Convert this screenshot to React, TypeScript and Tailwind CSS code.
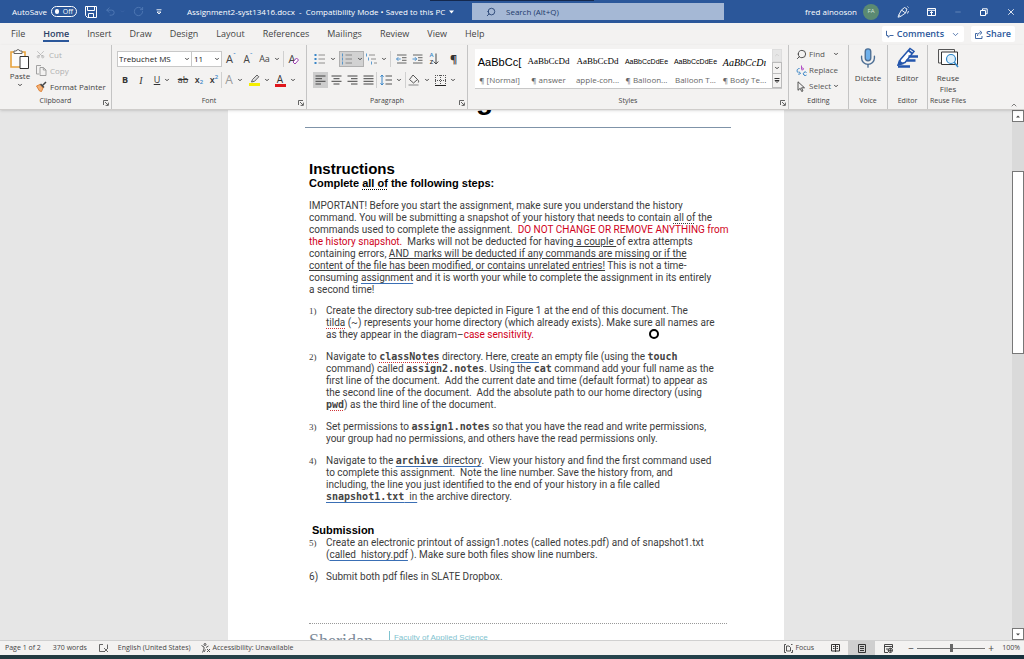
import React from 'react';
import { ChevronDown, ChevronUp, Mic, Minus, Scissors, Search, Undo2, RotateCw, X } from 'lucide-react';

const tabs = ['File', 'Home', 'Insert', 'Draw', 'Design', 'Layout', 'References', 'Mailings', 'Review', 'View', 'Help'];

const styles = [
  { sample: 'AaBbCc[', name: '¶ [Normal]', look: 'font-["Liberation_Sans"] text-[11px]' },
  { sample: 'AaBbCcDd', name: '¶ answer', look: 'font-["Liberation_Serif"] text-[9px]' },
  { sample: 'AaBbCcDd', name: 'apple-con...', look: 'font-["Liberation_Serif"] text-[9px]' },
  { sample: 'AaBbCcDdEe', name: '¶ Balloon...', look: 'font-["Liberation_Sans"] text-[7px]' },
  { sample: 'AaBbCcDdEe', name: 'Balloon T...', look: 'font-["Liberation_Sans"] text-[7px]' },
  { sample: 'AaBbCcDı', name: '¶ Body Te...', look: 'font-["Liberation_Serif"] text-[10px] italic' },
];

function Chevron() {
  return <ChevronDown size={6} strokeWidth={4} className="shrink-0 text-[#444]" aria-hidden="true" />;
}

function Launcher({ label }: { label: string }) {
  return (
    <button aria-label={label} className="absolute right-[2px] bottom-[3px]">
      <svg width="6" height="6" viewBox="0 0 6 6" fill="none" stroke="#555" strokeWidth="0.9">
        <path d="M0.5 5V0.5H5M2 2l3 3M5.4 2.6v2.8H2.6" />
      </svg>
    </button>
  );
}

interface GroupProps {
  title: string;
  className: string;
  launcher?: boolean;
  children: React.ReactNode;
}

function Group({ title, className, launcher, children }: GroupProps) {
  return (
    <section className={`relative flex shrink-0 flex-col border-r border-[#c4c4c4] ${className}`} aria-label={title}>
      <div className="h-[50px]">{children}</div>
      <div className="text-center text-[7px] leading-3 whitespace-nowrap text-[#444]">{title}</div>
      {launcher && <Launcher label={`${title} settings`} />}
    </section>
  );
}

interface ToolProps {
  label: string;
  className: string;
  menu?: boolean;
  children?: React.ReactNode;
}

function Tool({ label, className, menu, children }: ToolProps) {
  return (
    <button aria-label={label} className={`flex h-4 shrink-0 items-center justify-center ${menu ? 'gap-1' : ''} ${className}`}>
      {children}
      {menu && <Chevron />}
    </button>
  );
}

function Divider() {
  return <span className="h-4 w-px shrink-0 bg-[#d0d0d0]" />;
}

function ListIcon({ kind }: { kind: 'bullets' | 'numbers' | 'levels' }) {
  return (
    <svg width="12" height="12" viewBox="0 0 12 12" fill="none" stroke="#777" strokeWidth="0.8">
      {kind === 'levels' ? (
        <>
          <path d="M4 2h6M6 6h5M9 10h3" />
          <path d="M1.5 0.5v3M3.5 4.5v3M6.5 8.5v3" stroke="#3a86c8" />
        </>
      ) : (
        <>
          <path d="M4.5 2H11M4.5 6H11M4.5 10H11" />
          {kind === 'bullets' ? (
            <path d="M0.5 2h2M0.5 6h2M0.5 10h2" stroke="#3a86c8" strokeWidth="2" />
          ) : (
            <path d="M1.5 0.5v3M1.5 4.5v3M1.5 8.5v3" stroke="#3a86c8" />
          )}
        </>
      )}
    </svg>
  );
}

function IndentIcon({ flip }: { flip?: boolean }) {
  return (
    <svg width="11" height="10" viewBox="0 0 11 10" fill="none" stroke="#555" strokeWidth="0.9">
      <path d="M1 1h9.5M6 3.7h4.5M6 6.3h4.5M1 9h9.5" />
      <path d={flip ? 'M0.5 5h4M3 3.2L4.7 5L3 6.8' : 'M4.7 5h-4M2.3 3.2L0.5 5l1.8 1.8'} stroke="#3a86c8" />
    </svg>
  );
}

function AlignIcon({ d }: { d: string }) {
  return (
    <svg width="11" height="10" viewBox="0 0 11 10" fill="none" stroke="#444" strokeWidth="1">
      <path d={d} />
    </svg>
  );
}

function TitleBar() {
  return (
    <header className="relative flex h-[23px] shrink-0 items-center bg-[#2b579a] text-[8px] whitespace-nowrap text-white">
      <div className="flex flex-1 items-center pl-3">
        <label htmlFor="autosave">AutoSave</label>
        <button id="autosave" role="switch" aria-checked="false" className="ml-1 flex h-[11px] w-[26px] items-center gap-1 rounded-full border border-white px-[3px] text-[7px] leading-none">
          <span className="size-[5px] rounded-full bg-white" />
          Off
        </button>
        <button aria-label="Save" className="ml-2">
          <svg width="12" height="12" viewBox="0 0 12 12" fill="none" stroke="white" strokeWidth="1">
            <path d="M0.5 0.5h11v11h-9l-2-2zM2.5 0.5v4h7v-4M3.5 11.5v-4h5v4" />
          </svg>
        </button>
        <button aria-label="Undo" className="ml-2 text-[#5078b5]"><Undo2 size={11} /></button>
        <span className="ml-1 text-[#5078b5]"><ChevronDown size={5} /></span>
        <button aria-label="Redo" className="ml-2 text-[#5078b5]"><RotateCw size={11} /></button>
        <button aria-label="Customize toolbar" className="ml-3">
          <svg width="6" height="6" viewBox="0 0 6 6" fill="none" stroke="white" strokeWidth="0.9">
            <path d="M0.5 0.8h5M1 3l2 2l2-2z" />
          </svg>
        </button>
        <h1 className="ml-[25px] flex items-center gap-1">
          Assignment2-syst13416.docx&nbsp; - &nbsp;Compatibility Mode • Saved to this PC
          <svg width="5" height="4" viewBox="0 0 5 4" fill="white"><path d="M0 0.5h5L2.5 3.5z" /></svg>
        </h1>
      </div>
      <div className="flex h-[17px] w-[252px] items-center bg-[#a5b8d5] pl-[14px] text-[#1d3a6b]">
        <Search size={10} className="-scale-x-100" />
        <input aria-label="Search" placeholder="Search (Alt+Q)" className="ml-[10px] min-w-0 flex-1 outline-none placeholder:text-[#1d3a6b]" />
      </div>
      <div className="flex w-[300px] items-center justify-end pr-2">
        <span>fred ainooson</span>
        <span className="ml-[6px] flex size-4 items-center justify-center rounded-full bg-[#5b8a72] text-[6px] text-[#d5e5dc]">FA</span>
        <button aria-label="Coming soon" className="ml-[18px]">
          <svg width="12" height="12" viewBox="0 0 12 12" fill="none" stroke="white" strokeWidth="0.9">
            <path d="M7.500 1.500L10 3L8.500 7L3.500 10.500L1 11.200L2 8.500L4.500 4zM4.500 4l4 3M2 8.500l1.500 2M10.500 0.500l1 1M11.500 5l-1 2.500" />
          </svg>
        </button>
        <button aria-label="Ribbon display options" className="ml-[18px]">
          <svg width="9" height="8" viewBox="0 0 9 8" fill="none" stroke="white" strokeWidth="1">
            <path d="M0.5 0.5h8v7h-8zM0.5 2.3h8M4.5 7V3.5M3 5l1.5-1.5L6 5" />
          </svg>
        </button>
        <button aria-label="Minimize" className="ml-[18px] text-[#7d9ac6]"><Minus size={8} /></button>
        <button aria-label="Restore" className="ml-[18px]">
          <svg width="8" height="8" viewBox="0 0 8 8" fill="none" stroke="white" strokeWidth="1">
            <path d="M0.5 2.5h5v5h-5zM2.5 2V0.8h4.7v5H6" />
          </svg>
        </button>
        <button aria-label="Close" className="ml-[18px]"><X size={10} /></button>
      </div>
      <div className="absolute top-0 left-[42%] h-px w-[16%] bg-[#14284d]" />
    </header>
  );
}

function TabRow() {
  return (
    <nav className="flex h-[22px] shrink-0 items-center pr-[9px] pl-[11px] text-[9px] text-[#444]">
      {tabs.map((tab) => (
        <a
          key={tab}
          href={`#${tab}`}
          className={`mr-[18px] leading-3 ${tab === 'Home' ? 'border-b-2 border-[#2b579a] pt-[2px] font-semibold text-[#2b3f66]' : ''}`}
        >
          {tab}
        </a>
      ))}
      <div className="ml-auto flex gap-[7px] font-semibold text-[#2b579a]">
        <button className="flex h-4 items-center gap-[3px] rounded-xs bg-white px-1">
          <svg width="8" height="8" viewBox="0 0 8 8" fill="none" stroke="currentColor" strokeWidth="0.9">
            <path d="M0.5 0.8v4.7H2V7.3L4 5.5h3.5" />
          </svg>
          Comments
          <ChevronDown size={9} className="ml-1" />
        </button>
        <button className="flex h-4 items-center gap-[3px] rounded-xs bg-white px-1">
          <svg width="8" height="9" viewBox="0 0 8 9" fill="none" stroke="currentColor" strokeWidth="0.9">
            <path d="M2.5 3.5H0.5v5h6.5V6M2.5 6c0-2 1-3.3 3-3.3M4.8 0.8L7 2.7L4.8 4.6" />
          </svg>
          Share
        </button>
      </div>
    </nav>
  );
}

function ClipboardGroup() {
  return (
    <Group title="Clipboard" className="w-[112px]" launcher>
      <div className="flex pl-2 text-[8px] text-[#444]">
        <button className="flex w-6 flex-col items-center pt-[3px] leading-3">
          <svg width="20" height="22" viewBox="0 0 20 22" fill="none">
            <path d="M1 4h14v15H1z" fill="#fbfbfb" stroke="#e8a33d" strokeWidth="1.6" />
            <path d="M4 5.5V3h2.3a1.8 1.8 0 0 1 3.5 0H12v2.5z" fill="#fff" stroke="#666" />
            <path d="M10 8.500h8.500v12H10z" fill="#fff" stroke="#333" />
          </svg>
          Paste
          <Chevron />
        </button>
        <div className="flex flex-col gap-px pt-[2px] pl-1">
          <button className="flex h-[15px] items-center gap-1 text-[#b0b0b0]"><Scissors size={9} className="-rotate-90" />Cut</button>
          <button className="flex h-[15px] items-center gap-[3px] text-[#b0b0b0]">
            <svg width="11" height="11" viewBox="0 0 11 11" fill="none" stroke="#999" strokeWidth="0.9">
              <path d="M3 9H0.500V0.500H5M4 2.500h3.500l2.500 2.500v5.500H4zM7.300 2.700V5H10" />
            </svg>
            Copy
          </button>
          <button className="flex h-[15px] items-center gap-[3px] whitespace-nowrap">
            <svg width="11" height="11" viewBox="0 0 11 11" fill="none">
              <path d="M0.500 5L4 3.500L7 7L5.500 10.500L3.500 10z" fill="#f2b27a" stroke="#d9711c" strokeWidth="0.800" />
              <path d="M4.500 3l3.500 3.500M6.500 4.500L10 1" stroke="#444" strokeWidth="1.500" />
            </svg>
            Format Painter
          </button>
        </div>
      </div>
    </Group>
  );
}

function FontGroup() {
  return (
    <Group title="Font" className="w-[195px]" launcher>
      <div className="flex items-center pt-[6px] pl-[5px] text-[#444]">
        <div className="relative flex items-center">
          <select aria-label="Font" className="h-4 w-[75px] appearance-none border border-[#c8c8c8] bg-white pl-px text-[8px] text-[#222]">
            <option>Trebuchet MS</option>
          </select>
          <span className="pointer-events-none absolute right-[2px]"><Chevron /></span>
        </div>
        <div className="relative flex items-center">
          <select aria-label="Font size" className="h-4 w-[30px] appearance-none border border-l-0 border-[#c8c8c8] bg-white pl-[2px] text-[8px] text-[#222]">
            <option>11</option>
          </select>
          <span className="pointer-events-none absolute right-[2px]"><Chevron /></span>
        </div>
        <Tool label="Increase font size" className="w-[18px] text-[11px]">A<sup className="text-[7px] text-[#3a86c8]">ˆ</sup></Tool>
        <Tool label="Decrease font size" className="w-4 text-[10px]">A<sup className="text-[7px] text-[#3a86c8]">ˇ</sup></Tool>
        <Tool label="Change case" menu className="w-[27px] text-[9px]">Aa</Tool>
        <Divider />
        <Tool label="Clear formatting" className="w-5 text-[11px]">
          A
          <svg width="7" height="8" viewBox="0 0 7 8" className="-ml-[3px] mt-1" fill="#fff" stroke="#9b3fae" strokeWidth="1">
            <path d="M1 5l3.500-4L6.500 3L3 7z" />
          </svg>
        </Tool>
      </div>
      <div className="flex items-center pt-[5px] pl-[5px] text-[9px] text-[#333]">
        <Tool label="Bold" className="w-4 font-bold">B</Tool>
        <Tool label="Italic" className='w-4 font-["Liberation_Serif"] text-[10px] italic'>I</Tool>
        <Tool label="Underline" menu className="w-[26px] underline">U</Tool>
        <Tool label="Strikethrough" className="w-4 line-through">ab</Tool>
        <Tool label="Subscript" className="w-4 font-semibold">x<sub className="text-[6px] text-[#3a86c8]">2</sub></Tool>
        <Tool label="Superscript" className="w-[14px] font-semibold">x<sup className="text-[6px] text-[#3a86c8]">2</sup></Tool>
        <Divider />
        <Tool label="Text effects" menu className="w-6 text-[12px] text-[#999]">A</Tool>
        <Tool label="Highlight" menu className="w-[26px]">
          <svg width="11" height="12" viewBox="0 0 11 12" fill="none">
            <path d="M2.500 8l1-2.500L8 1l1.800 1.800L5.500 7.300z" stroke="#555" fill="#ddd" strokeWidth="0.900" />
            <path d="M0 10.500h11" stroke="#f5ee00" strokeWidth="3" />
          </svg>
        </Tool>
        <Tool label="Font color" menu className="w-[26px]">
          <span className="w-[11px] border-b-[3px] border-[#e0161b] text-center text-[10px] leading-[10px]">A</span>
        </Tool>
      </div>
    </Group>
  );
}

function ParagraphGroup() {
  return (
    <Group title="Paragraph" className="w-[161px]" launcher>
      <div className="flex items-center pt-[6px] pl-[6px] text-[#333]">
        <Tool label="Bullets" menu className="w-6"><ListIcon kind="bullets" /></Tool>
        <Tool label="Numbering" menu className="ml-[2px] w-[25px] border border-[#b0b0b0] bg-[#d2d2d2]"><ListIcon kind="numbers" /></Tool>
        <Tool label="Multilevel list" menu className="w-6"><ListIcon kind="levels" /></Tool>
        <span className="w-[2px]" />
        <Divider />
        <Tool label="Decrease indent" className="ml-[2px] w-4"><IndentIcon /></Tool>
        <Tool label="Increase indent" className="w-4"><IndentIcon flip /></Tool>
        <Tool label="Sort" className="w-[19px]">
          <span className="flex flex-col text-[6px] leading-[7px] font-semibold"><span className="text-[#3a86c8]">A</span><span>Z</span></span>
          <svg width="6" height="12" viewBox="0 0 6 12" fill="none" stroke="#444"><path d="M3 0.500v10.500M0.700 8.500L3 11l2.300-2.500" /></svg>
        </Tool>
        <Tool label="Show marks" className="w-[19px] text-[11px] font-bold">¶</Tool>
      </div>
      <div className="flex items-center pt-[5px] pl-[6px]">
        <Tool label="Align left" className="w-[15px] bg-[#cdcdcd]"><AlignIcon d="M0.500 1H10.500M0.500 3.700H7M0.500 6.300H10.500M0.500 9H6" /></Tool>
        <Tool label="Center" className="w-4"><AlignIcon d="M0.500 1H10.500M2.500 3.700H8.500M0.500 6.300H10.500M2.500 9H8.500" /></Tool>
        <Tool label="Align right" className="w-4"><AlignIcon d="M0.500 1H10.500M4 3.700H10.500M0.500 6.300H10.500M4 9H10.500" /></Tool>
        <Tool label="Justify" className="w-4"><AlignIcon d="M0.500 1H10.500M0.500 3.700H10.500M0.500 6.300H10.500M0.500 9H10.500" /></Tool>
        <Divider />
        <Tool label="Line spacing" menu className="w-7">
          <svg width="12" height="12" viewBox="0 0 12 12" fill="none" stroke="#555">
            <path d="M5.500 2H12M5.500 6H12M5.500 10H12" />
            <path d="M2 1v10M0.500 2.800L2 1l1.500 1.800M0.500 9.200L2 11l1.500-1.800" stroke="#3a86c8" />
          </svg>
        </Tool>
        <Divider />
        <Tool label="Shading" menu className="w-[26px]">
          <svg width="12" height="12" viewBox="0 0 12 12" fill="none" stroke="#444" strokeWidth="0.900">
            <path d="M5 1l4.500 4.500L5.500 9L1.500 5.500zM9.500 5.500c1 1 1.500 2 0.800 3" />
            <path d="M0.500 11h10" stroke="#aaa" strokeWidth="1.500" />
          </svg>
        </Tool>
        <Tool label="Borders" menu className="w-[26px]">
          <svg width="11" height="11" viewBox="0 0 11 11" fill="none" stroke="#555">
            <path d="M0 0.500H11M0.500 0V10M10.500 0V10M5.500 0V10M0 5.500H11" strokeDasharray="1 1" />
            <path d="M0 10.500H11" stroke="#222" />
          </svg>
        </Tool>
      </div>
    </Group>
  );
}

function StylesGroup() {
  return (
    <Group title="Styles" className="w-[321px]" launcher>
      <div className="pt-1 pl-[7px]">
        <div className="flex h-10 w-[307px] border-b border-[#c8c8c8] bg-white">
          {styles.map((style, i) => (
            <button key={i} className="flex w-[49px] flex-col items-center overflow-hidden whitespace-nowrap">
              <span className={`flex h-[26px] items-center text-black ${style.look}`}>{style.sample}</span>
              <span className="text-[8px] leading-[10px] text-[#666]">{style.name}</span>
            </button>
          ))}
          <div className="ml-auto flex w-[10px] flex-col bg-[#f3f2f1]">
            <button aria-label="Previous styles" className="flex h-[13px] items-center justify-center border border-[#ddd] bg-[#e6e6e6]"><ChevronUp size={6} color="#bbb" /></button>
            <button aria-label="Next styles" className="flex h-[13px] items-center justify-center border border-[#bbb]"><Chevron /></button>
            <button aria-label="More styles" className="flex h-[14px] items-center justify-center border border-t-0 border-[#bbb]">
              <svg width="6" height="6" viewBox="0 0 6 6" fill="none" stroke="#333"><path d="M0.500 0.500h5M1 2.500l2 2l2-2z" /></svg>
            </button>
          </div>
        </div>
      </div>
    </Group>
  );
}

function Ribbon() {
  return (
    <div className="relative z-10 flex h-[65px] shrink-0 border-b border-[#cfcdcb] shadow-sm">
      <ClipboardGroup />
      <FontGroup />
      <ParagraphGroup />
      <StylesGroup />
      <Group title="Editing" className="w-[60px]">
        <div className="flex flex-col pt-px pl-[7px] text-[8px] text-[#555]">
          <button className="flex h-4 items-center gap-[2px]"><Search size={11} strokeWidth={2} className="-scale-x-100 text-[#444]" />Find<span className="ml-[6px]"><Chevron /></span></button>
          <button className="flex h-4 items-center gap-[2px]">
            <svg width="11" height="11" viewBox="0 0 11 11" fill="none">
              <path d="M5.500 0.500v4M5.500 3h1.500a1 1 0 0 1 0 1.800H5.500" stroke="#b14fc5" />
              <path d="M3.500 3.500C0.500 3.500 0.500 7 2.500 8M10.500 7.500a1.800 1.800 0 1 0 0 2.500M3 6.500L4.500 8.500L2.500 9.500" stroke="#2f7fc4" />
            </svg>
            Replace
          </button>
          <button className="flex h-4 items-center gap-[2px]">
            <svg width="11" height="11" viewBox="0 0 11 11" fill="none" stroke="#444" strokeWidth="0.900"><path d="M2 0.800v8.500l2.200-2l1.500 3.200l1.300-0.600L5.500 6.800H8.500z" /></svg>
            Select<Chevron />
          </button>
        </div>
      </Group>
      <Group title="Voice" className="w-[39px]">
        <button className="flex w-full flex-col items-center pt-[2px] text-[8px] leading-[11px] text-[#444]">
          <Mic size={22} strokeWidth={1.500} className="text-[#4d6f95] [&>rect]:fill-[#6fb1ec]" />
          <span className="pt-[3px]">Dictate</span>
        </button>
      </Group>
      <Group title="Editor" className="w-[40px]">
        <button className="flex w-full flex-col items-center pt-[2px] text-[8px] leading-[11px] text-[#444]">
          <svg width="22" height="22" viewBox="0 0 22 22" fill="none" stroke="#2456ad">
            <path d="M1.500 17.500L3.500 12.500L13 1.500L17 4.500L8 15.500z" fill="#fff" strokeWidth="1.500" />
            <path d="M11.500 3.500l4 3.200M1.500 17.500l1-3l2.500 2z" strokeWidth="2" />
            <path d="M11.500 9.500H21M9.500 13.500H18.500M1 19.500H13" strokeWidth="2.500" />
          </svg>
          <span className="pt-[3px]">Editor</span>
        </button>
      </Group>
      <section aria-label="Reuse Files" className="flex w-[40px] flex-col">
        <button className="flex h-[50px] flex-col items-center pt-[2px] text-[8px] leading-[11px] text-[#444]">
          <svg width="22" height="22" viewBox="0 0 22 22" fill="none" stroke="#555">
            <path d="M17.500 5V2.500H1.500V16H4" />
            <path d="M4.500 5h16v12.500H4.500z" fill="#fff" stroke="#333" />
            <circle cx="14" cy="12" r="4.500" fill="#dff0fb" stroke="#2f86c8" strokeWidth="1.200" />
            <path d="M17.300 15.300L21 20" stroke="#2f86c8" strokeWidth="1.500" />
          </svg>
          <span className="pt-[3px]">Reuse<br />Files</span>
        </button>
        <span className="text-center text-[7px] leading-3 whitespace-nowrap text-[#444]">Reuse Files</span>
      </section>
      <button aria-label="Collapse ribbon" className="ml-auto self-end pr-[6px] text-[#444]"><ChevronUp size={8} /></button>
    </div>
  );
}

const code = 'font-["DejaVu_Sans_Mono"] text-[10px] leading-[8px] font-bold text-[#444]';
const spell = 'underline decoration-dotted decoration-[#d13438] underline-offset-2';
const grammar = 'underline decoration-[#3a6fb5] underline-offset-2';

function Step({ n, children }: { n: number; children: React.ReactNode }) {
  return (
    <li className="mb-[10px] flex">
      <span className={`w-[17px] shrink-0 ${n < 6 ? 'font-["Liberation_Serif"] text-[9px]' : ''}`}>{n})</span>
      <div>{children}</div>
    </li>
  );
}

function Page() {
  return (
    <article className='relative mx-auto flex w-[556px] flex-col overflow-hidden bg-white px-[77px] font-["Roboto"] text-[10px] leading-3 whitespace-pre text-[#3c3c3c]'>
      <div className='flex h-[6px] shrink-0 items-end overflow-hidden pl-[171px] font-["Liberation_Sans"] text-[28px] leading-8 font-bold text-black'>g</div>
      <div className="mt-[11px] -mr-[24px] h-px shrink-0 bg-[#7f93a8]" />
      <div className="flex flex-1 flex-col pl-1">
        <h2 className='mt-[33px] font-["Liberation_Sans"] text-[15px] leading-4 font-bold text-black'>Instructions</h2>
        <h3 className='font-["Liberation_Sans"] text-[11px] leading-[13px] font-bold text-black'>
          Complete <span className="underline decoration-dotted underline-offset-2">all of</span> the following steps:
        </h3>
        <p className="mt-[10px]">
          IMPORTANT! Before you start the assignment, make sure you understand the history<br />
          command. You will be submitting a snapshot of your history that needs to contain <span className="underline decoration-dotted underline-offset-2">all of</span> the<br />
          commands used to complete the assignment.  <span className="text-[#d0021b]">DO NOT CHANGE OR REMOVE ANYTHING from</span><br />
          <span className="text-[#d0021b]">the history snapshot.</span>  Marks will not be deducted for having<u> a couple </u>of extra attempts<br />
          containing errors, <u>AND  marks will be deducted if any commands are missing or if the</u><br />
          <u>content of the file has been modified, or contains unrelated entries!</u> This is not a time-<br />
          consuming <span className={grammar}>assignment</span> and it is worth your while to complete the assignment in its entirely<br />
          a second time!
        </p>
        <ol className="mt-[9px]">
          <Step n={1}>
            Create the directory sub-tree depicted in Figure 1 at the end of this document. The<br />
            <span className={spell}>tilda</span> (~) represents your home directory (which already exists). Make sure all names are<br />
            as they appear in the diagram–<span className="text-[#d0021b]">case sensitivity.</span>
          </Step>
          <Step n={2}>
            Navigate to <span className={`${code} ${spell}`}>classNotes</span> directory. Here, <span className={grammar}>create</span> an empty file (using the <span className={code}>touch</span><br />
            command) called <span className={code}>assign2.notes</span>. Using the <span className={code}>cat</span> command add your full name as the<br />
            first line of the document.  Add the current date and time (default format) to appear as<br />
            the second line of the document.  Add the absolute path to our home directory (using<br />
            <span className={`${code} ${spell}`}>pwd</span>) as the third line of the document.
          </Step>
          <Step n={3}>
            Set permissions to <span className={code}>assign1.notes</span> so that you have the read and write permissions,<br />
            your group had no permissions, and others have the read permissions only.
          </Step>
          <Step n={4}>
            Navigate to the <span className={grammar}><span className={code}>archive</span>  directory</span>.  View your history and find the first command used<br />
            to complete this assignment.  Note the line number. Save the history from, and<br />
            including, the line you just identified to the end of your history in a file called<br />
            <span className={grammar}><span className={code}>snapshot1.txt</span>  in</span> the archive directory.
          </Step>
        </ol>
        <h3 className='mt-[11px] pl-[3px] font-["Liberation_Sans"] text-[11px] leading-[13px] font-bold text-black'>Submission</h3>
        <ol>
          <Step n={5}>
            Create an electronic printout of assign1.notes (called notes.pdf) and of snapshot1.txt<br />
            (<span className={grammar}>called  history.pdf</span> ). Make sure both files show line numbers.
          </Step>
          <Step n={6}>Submit both pdf files in SLATE Dropbox.</Step>
        </ol>
        <footer className="mt-auto -mr-[20px] flex h-[17px] gap-4 overflow-hidden border-t border-dotted border-[#999] pt-[7px]">
          <span className='font-["Liberation_Serif"] text-[18px] leading-5 text-[#7d8b99]'>Sheridan</span>
          <span className='h-5 border-l border-[#7fc3cf] pl-1 font-["Liberation_Sans"] text-[8px] leading-[14px] text-[#7fc3cf]'>Faculty of Applied Science</span>
        </footer>
      </div>
      <div className="absolute top-[219px] left-[421px] size-[10px] rounded-full border-2 border-black" />
    </article>
  );
}

function ScrollBar() {
  return (
    <div className="flex w-3 shrink-0 flex-col bg-[#dadada]">
      <button aria-label="Scroll up" className="flex h-3 items-center justify-center border border-[#777] bg-white">
        <svg width="4" height="3" viewBox="0 0 4 3" fill="#444"><path d="M0 2.500h4L2 0.500z" /></svg>
      </button>
      <div className="flex-1 pt-[49px]">
        <div className="h-[183px] border border-[#777] bg-white" />
      </div>
      <button aria-label="Scroll down" className="flex h-3 items-center justify-center border border-[#777] bg-white">
        <svg width="4" height="3" viewBox="0 0 4 3" fill="#444"><path d="M0 0.500h4L2 2.500z" /></svg>
      </button>
    </div>
  );
}

function StatusBar() {
  return (
    <footer className="flex h-[15px] shrink-0 items-center border-t border-[#d0d0d0] pr-1 pl-[5px] text-[7px] whitespace-nowrap text-[#444]">
      <span>Page 1 of 2</span>
      <span className="ml-3">370 words</span>
      <svg className="ml-3" width="10" height="9" viewBox="0 0 10 9" fill="none" stroke="#555" strokeWidth="0.900"><path d="M4 0.500H0.500v7H6M8.500 0.500v4M5 4l4 4M9 4L5 8" /></svg>
      <span className="ml-[9px]">English (United States)</span>
      <svg className="ml-[10px] mr-[2px]" width="10" height="10" viewBox="0 0 10 10" fill="none" stroke="#444" strokeWidth="0.900"><circle cx="4" cy="1.500" r="1" /><path d="M0.500 2.500L3 4v2L1.500 9.500M4.500 6.500L3 9M7.500 3L5 4.500M6 6l3 3M9 6L6 9" /></svg>
      <span>Accessibility: Unavailable</span>
      <button className="ml-auto flex items-center gap-[2px]">
        <svg width="9" height="9" viewBox="0 0 9 9" fill="none" stroke="#444" strokeWidth="0.900"><path d="M2 0.500H0.500v8H2M7 0.500h1.500M7 8.500h1.500V6M2.500 2h2.500l1.500 1.500V7H2.500z" /></svg>
        Focus
      </button>
      <button aria-label="Read mode" className="ml-2 flex w-[26px] justify-center">
        <svg width="9" height="8" viewBox="0 0 9 8" fill="none" stroke="#333"><path d="M0.500 0.500h8v6.500h-8zM4.500 0.500V8M2 2.500h1.500M2 4.500h1.500M5.500 2.500H7M5.500 4.500H7" /></svg>
      </button>
      <button aria-label="Print layout" className="flex h-[14px] w-[27px] items-center justify-center bg-[#cfcfcf]">
        <svg width="8" height="9" viewBox="0 0 8 9" fill="none" stroke="#333"><path d="M0.500 0.500h7v8h-7zM2 2.500h4M2 4.500h4M2 6.500h4" /></svg>
      </button>
      <button aria-label="Web layout" className="flex w-[27px] justify-center">
        <svg width="9" height="9" viewBox="0 0 9 9" fill="none" stroke="#333" strokeWidth="0.900"><path d="M0.500 4V0.500h8V4M0.500 2.500h8M0.500 4v4.500H4M2 5h2" /><circle cx="6.300" cy="6.300" r="2.200" /><path d="M4 6.300h4.500M6.300 4v4.500" /></svg>
      </button>
      <button aria-label="Zoom out" className="ml-1 w-[10px] text-[10px] leading-none">−</button>
      <input
        type="range"
        aria-label="Zoom"
        defaultValue={50}
        className="mx-px h-px w-[68px] appearance-none bg-[#777] [&::-webkit-slider-thumb]:h-[8px] [&::-webkit-slider-thumb]:w-[3px] [&::-webkit-slider-thumb]:appearance-none [&::-webkit-slider-thumb]:bg-[#666]"
      />
      <button aria-label="Zoom in" className="w-[10px] text-[10px] leading-none">+</button>
      <span className="ml-[6px]">100%</span>
    </footer>
  );
}

export default function App() {
  return (
    <div className='flex h-screen flex-col overflow-hidden bg-[#f3f2f1] font-["Open_Sans",sans-serif]'>
      <TitleBar />
      <TabRow />
      <Ribbon />
      <main className="flex min-h-0 flex-1 bg-[#e6e6e6]">
        <div className="flex min-w-0 flex-1">
          <Page />
        </div>
        <ScrollBar />
      </main>
      <StatusBar />
      <div className="h-1 shrink-0 bg-linear-to-r from-[#22393f] via-[#2b4a52] to-[#16303c]" />
    </div>
  );
}
